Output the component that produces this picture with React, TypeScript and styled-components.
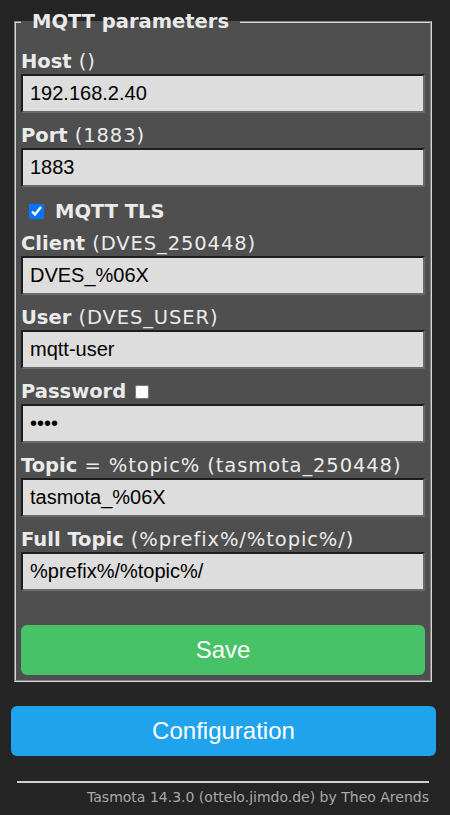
import styled, { createGlobalStyle } from "styled-components";

const GlobalStyle = createGlobalStyle`
  body {
    margin: 0;
    background: #252525;
    color: #eaeaea;
    font-family: "DejaVu Sans", Verdana, sans-serif;
  }
`;

const Page = styled.div`
  padding: 10px 14px 0 11px;
`;

const Fieldset = styled.fieldset`
  margin: 0 4px 0 3px;
  padding: 0 5px 5px;
  border: 2px groove #d8d8d8;
  background: #4f4f4f;
  min-width: 0;
`;

const Legend = styled.legend`
  padding: 0 11px;
  font-size: 19.5px;
  font-weight: bold;
  line-height: 24px;
`;

const Field = styled.div<{ $first?: boolean; $gap?: number }>`
  display: flex;
  flex-direction: column;
  margin-top: ${({ $first, $gap }) => ($gap ? $gap : $first ? 16 : 11)}px;
`;

const Label = styled.div`
  display: flex;
  align-items: center;
  font-size: 19.5px;
  line-height: 24px;
  height: 24px;
  white-space: nowrap;

  b {
    font-weight: bold;
  }
`;

const Hint = styled.span`
  letter-spacing: 0.9px;
`;

const Input = styled.input`
  box-sizing: border-box;
  width: 100%;
  height: 39px;
  margin: 0;
  padding: 0 7px;
  border: 2px solid;
  border-color: #1e1e1e #6a6a6a #6a6a6a #1e1e1e;
  background: #dddddd;
  color: #000;
  font-family: "Liberation Sans", Arial, sans-serif;
  font-size: 20px;
  outline: none;
`;

const CheckRow = styled.label`
  display: flex;
  align-items: center;
  height: 24px;
  margin-top: 12px;
  padding-left: 8px;
  font-size: 19.5px;
  font-weight: bold;
`;

const Check = styled.input<{ $size: number; $left: number }>`
  width: ${({ $size }) => $size}px;
  height: ${({ $size }) => $size}px;
  margin: 0 ${({ $left }) => ($left ? 0 : 11)}px 0 ${({ $left }) => $left}px;
`;

const Button = styled.button<{ $color: string; $top: number }>`
  display: block;
  width: 100%;
  height: 50px;
  margin-top: ${({ $top }) => $top}px;
  border: 0;
  border-radius: 6px;
  background: ${({ $color }) => $color};
  color: #fff;
  font-family: "Liberation Sans", Arial, sans-serif;
  font-size: 24px;
  line-height: 50px;
  padding: 0;
`;

const Footer = styled.div`
  margin: 25px 7px 0 6px;
  text-align: right;
`;

const Rule = styled.hr`
  margin: 0;
  border: 0;
  border-top: 2px solid #cfcfcf;
`;

const Credit = styled.div`
  margin-top: 6px;
  color: #aaa;
  font-size: 14px;
  line-height: 16px;
`;

interface TextFieldProps {
  name: string;
  hint: string;
  value: string;
  type?: string;
  first?: boolean;
  gap?: number;
  toggle?: boolean;
}

function TextField(props: TextFieldProps) {
  return (
    <Field $first={props.first} $gap={props.gap}>
      <Label>
        <b>{props.name}</b>
        {props.hint && <Hint>&nbsp;{props.hint}</Hint>}
        {props.toggle && <Check type="checkbox" $size={14} $left={9} />}
      </Label>
      <Input type={props.type || "text"} defaultValue={props.value} />
    </Field>
  );
}

export default function App() {
  return (
    <Page>
      <GlobalStyle />
      <Fieldset>
        <Legend>MQTT parameters</Legend>
        <TextField name="Host" hint="()" value="192.168.2.40" first />
        <TextField name="Port" hint="(1883)" value="1883" />
        <CheckRow>
          <Check type="checkbox" defaultChecked $size={15} $left={0} />
          MQTT TLS
        </CheckRow>
        <TextField name="Client" hint="(DVES_250448)" value="DVES_%06X" gap={9} />
        <TextField name="User" hint="(DVES_USER)" value="mqtt-user" />
        <TextField name="Password" hint="" value="1234" type="password" toggle />
        <TextField
          name="Topic"
          hint="= %topic% (tasmota_250448)"
          value="tasmota_%06X"
        />
        <TextField
          name="Full Topic"
          hint="(%prefix%/%topic%/)"
          value="%prefix%/%topic%/"
        />
        <Button $color="#47c266" $top={34}>
          Save
        </Button>
      </Fieldset>
      <Button $color="#1fa3ec" $top={24}>
        Configuration
      </Button>
      <Footer>
        <Rule />
        <Credit>Tasmota 14.3.0 (ottelo.jimdo.de) by Theo Arends</Credit>
      </Footer>
    </Page>
  );
}
